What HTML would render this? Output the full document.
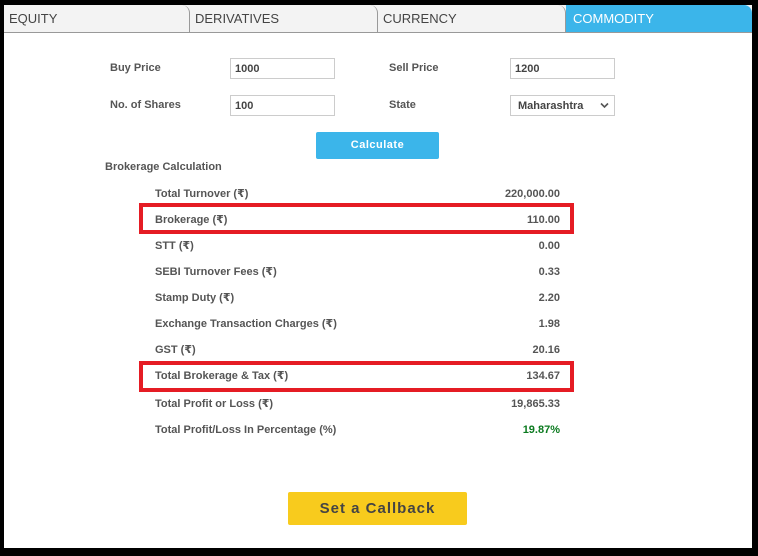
<!DOCTYPE html>
<html><head><meta charset="utf-8"><style>
*{margin:0;padding:0;box-sizing:border-box}
body{width:758px;height:556px;background:#000;position:relative;overflow:hidden;font-family:"Liberation Sans","DejaVu Sans",sans-serif;color:#555}
.panel{position:absolute;left:4px;top:5px;width:748px;height:543px;background:#fff}
.tabs{position:absolute;left:0;top:0;width:748px;height:28px;border-bottom:1px solid #999;background:#f3f3f3}
.tab{position:absolute;top:0;height:27px;font-size:13px;color:#444;padding:6px 0 0 5px;border-right:1px solid #999;border-top-right-radius:8px}
.tab.act{background:#3bb5ea;color:#fff;border:none}
.abs{position:absolute}
.lbl{font-size:11px;font-weight:bold;color:#555}
.inp{position:absolute;width:105px;height:21px;border:1px solid #ccc;font-size:11px;font-weight:bold;color:#444;padding:4px 0 0 4px}
.row{position:absolute;left:151px;width:405px;font-size:11px;font-weight:bold;color:#555;line-height:13px;margin-top:1px}
.row span{position:absolute;right:0;top:0}
.red{position:absolute;left:135px;width:435px;height:31px;border:4px solid #e51c24}
</style></head><body>
<div class="panel">
<div class="tabs">
<div class="tab" style="left:0;width:186px">EQUITY</div>
<div class="tab" style="left:186px;width:188px">DERIVATIVES</div>
<div class="tab" style="left:374px;width:188px">CURRENCY</div>
<div class="tab act" style="left:562px;width:186px;padding-left:7px">COMMODITY</div>
</div>
<div class="abs lbl" style="left:106px;top:57px">Buy Price</div>
<div class="inp" style="left:226px;top:53px">1000</div>
<div class="abs lbl" style="left:385px;top:57px">Sell Price</div>
<div class="inp" style="left:506px;top:53px">1200</div>
<div class="abs lbl" style="left:106px;top:94px">No. of Shares</div>
<div class="inp" style="left:226px;top:90px">100</div>
<div class="abs lbl" style="left:385px;top:94px">State</div>
<div class="inp" style="left:506px;top:90px;padding-left:7px">Maharashtra<svg style="position:absolute;right:5px;top:6px" width="9" height="7" viewBox="0 0 9 7"><path d="M1 1.5L4.5 5L8 1.5" fill="none" stroke="#555" stroke-width="1.6"/></svg></div>
<div class="abs" style="left:312px;top:127px;width:123px;height:27px;background:#3bb5ea;border-radius:2px;color:#fff;font-size:11px;font-weight:bold;text-align:center;line-height:27px;letter-spacing:.5px">Calculate</div>
<div class="abs lbl" style="left:101px;top:156px">Brokerage Calculation</div>
<div class="row" style="top:182px">Total Turnover (₹)<span>220,000.00</span></div>
<div class="red" style="top:198px"></div>
<div class="row" style="top:208px">Brokerage (₹)<span>110.00</span></div>
<div class="row" style="top:234px">STT (₹)<span>0.00</span></div>
<div class="row" style="top:260px">SEBI Turnover Fees (₹)<span>0.33</span></div>
<div class="row" style="top:286px">Stamp Duty (₹)<span>2.20</span></div>
<div class="row" style="top:312px">Exchange Transaction Charges (₹)<span>1.98</span></div>
<div class="row" style="top:338px">GST (₹)<span>20.16</span></div>
<div class="red" style="top:356px"></div>
<div class="row" style="top:364px">Total Brokerage &amp; Tax (₹)<span>134.67</span></div>
<div class="row" style="top:392px">Total Profit or Loss (₹)<span>19,865.33</span></div>
<div class="row" style="top:418px">Total Profit/Loss In Percentage (%)<span style="color:#0b7a1f">19.87%</span></div>
<div class="abs" style="left:284px;top:487px;width:179px;height:33px;background:#f8cb1d;border-radius:2px;color:#444;font-size:15px;font-weight:bold;text-align:center;line-height:33px;letter-spacing:1px">Set a Callback</div>
</div>
</body></html>
